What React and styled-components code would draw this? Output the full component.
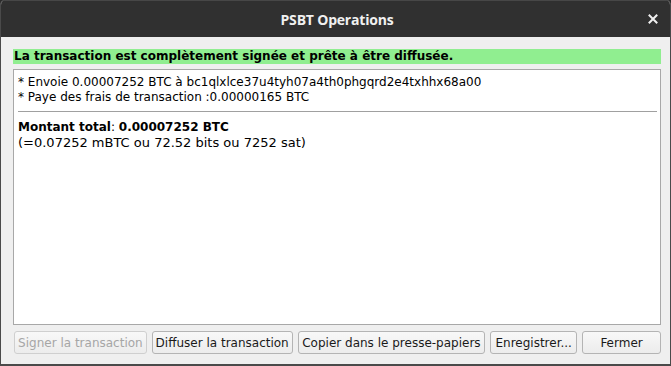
import React from "react";
import styled, { createGlobalStyle } from "styled-components";

const Global = createGlobalStyle`
  html, body { margin: 0; padding: 0; background: #2b2b2b; }
  #root { width: 671px; height: 366px; }
`;

const Window = styled.div`
  box-sizing: border-box;
  width: 671px;
  height: 366px;
  display: flex;
  flex-direction: column;
  background: #efefef;
  border-left: 1px solid #4a4a4a;
  border-right: 1px solid #4a4a4a;
  border-bottom: 2px solid #4a4a4a;
  border-radius: 5px 5px 0 0;
  overflow: hidden;
  font-family: "DejaVu Sans", "Liberation Sans", sans-serif;
  font-size: 12px;
  color: #000;
`;

const TitleBar = styled.div`
  position: relative;
  height: 37px;
  flex: none;
  background: #303030;
  border-top: 1px solid #474747;
  box-sizing: border-box;
  display: flex;
  align-items: center;
  justify-content: center;
`;

const Title = styled.div`
  font-family: "Open Sans", "Noto Sans", sans-serif;
  font-weight: 700;
  font-size: 14px;
  color: #f0f0f0;
  margin-left: 3px;
  letter-spacing: -0.2px;
`;

const Close = styled.div`
  position: absolute;
  right: 12px;
  top: 50%;
  transform: translateY(-50%);
  width: 10px;
  height: 10px;
  display: flex;
`;

const Body = styled.div`
  flex: 1;
  display: flex;
  flex-direction: column;
  padding: 12px 9px 10px 12px;
`;

const Status = styled.div`
  background: #90ee90;
  font-weight: 700;
  font-size: 12px;
  height: 15px;
  line-height: 15px;
  padding-left: 1px;
  white-space: nowrap;
`;

const TextArea = styled.div`
  margin-top: 5px;
  height: 256px;
  box-sizing: border-box;
  background: #fff;
  border: 1px solid #a8a8a8;
  padding: 5px 3px 0 4px;
  line-height: 15px;
`;

const Line = styled.div`
  white-space: nowrap;
  font-size: ${(p) => p.$size || 12}px;
`;

const Rule = styled.hr`
  border: none;
  border-top: 1px solid #a0a0a0;
  margin: 6px 0 8px 0;
`;

const ButtonRow = styled.div`
  display: flex;
  gap: 5px;
  margin-top: 6px;
  padding-left: 1px;
`;

const Button = styled.button`
  box-sizing: border-box;
  width: ${(p) => p.$w}px;
  height: 23px;
  padding: 0;
  font-family: "DejaVu Sans", "Liberation Sans", sans-serif;
  font-size: 12px;
  color: ${(p) => (p.disabled ? "#a6a6a6" : "#1a1a1a")};
  background: linear-gradient(#f8f8f8, #ececec);
  border: 1px solid ${(p) => (p.disabled ? "#cfcfcf" : "#b4b4b4")};
  border-radius: 3px;
  white-space: nowrap;
`;

export default function App() {
  return (
    <>
      <Global />
      <Window>
        <TitleBar>
          <Title>PSBT Operations</Title>
          <Close>
            <svg width="10" height="10" viewBox="0 0 10 10">
              <path d="M1.5 1.5 L8.5 8.5 M8.5 1.5 L1.5 8.5" stroke="#f0f0f0" strokeWidth="2" strokeLinecap="square" />
            </svg>
          </Close>
        </TitleBar>
        <Body>
          <Status>La transaction est complètement signée et prête à être diffusée.</Status>
          <TextArea>
            <Line>* Envoie 0.00007252 BTC à bc1qlxlce37u4tyh07a4th0phgqrd2e4txhhx68a00</Line>
            <Line>* Paye des frais de transaction :0.00000165 BTC</Line>
            <Rule />
            <Line>
              <b>Montant total</b>: <b>0.00007252 BTC</b>
            </Line>
            <Line $size={13}>(=0.07252 mBTC ou 72.52 bits ou 7252 sat)</Line>
          </TextArea>
          <ButtonRow>
            <Button $w={133} disabled>Signer la transaction</Button>
            <Button $w={141}>Diffuser la transaction</Button>
            <Button $w={188}>Copier dans le presse-papiers</Button>
            <Button $w={87}>Enregistrer...</Button>
            <Button $w={79}>Fermer</Button>
          </ButtonRow>
        </Body>
      </Window>
    </>
  );
}
